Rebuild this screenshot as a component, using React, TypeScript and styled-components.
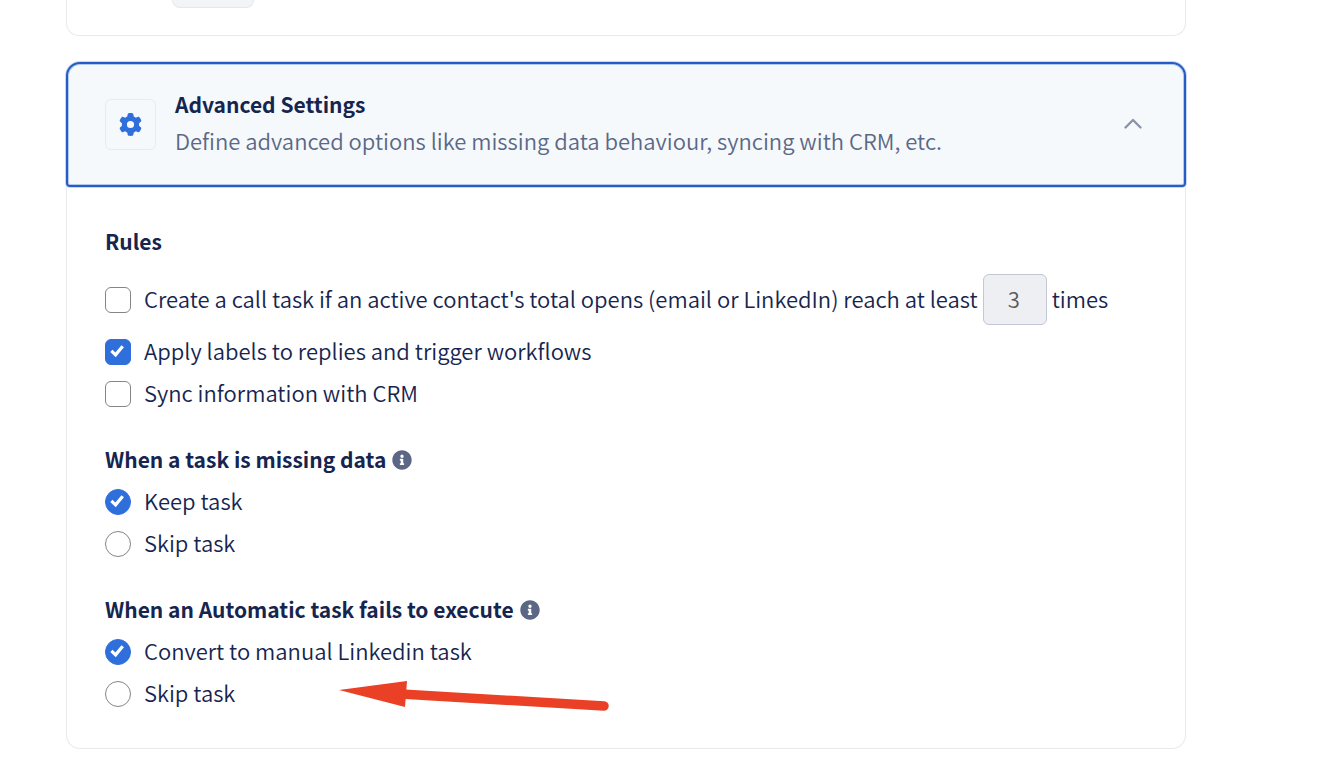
import React, { useState } from "react";
import styled, { createGlobalStyle } from "styled-components";
import { FaInfoCircle } from "react-icons/fa";
import { FaGear } from "react-icons/fa6";

const GlobalStyle = createGlobalStyle`
  *, *::before, *::after { box-sizing: border-box; }
  body {
    margin: 0;
    background: #fff;
    color: #16254f;
    font-family: "Source Sans Pro", "Noto Sans CJK SC", "Noto Sans", sans-serif;
    font-size: 22px;
    font-weight: 350;
    line-height: 32px;
  }
  button, input { font: inherit; color: inherit; }
`;

const Page = styled.main`
  display: flex;
  flex-direction: column;
  gap: 26px;
  padding: 0 158px 15px 66px;
`;

const PreviousCard = styled.section`
  padding: 0 105px 27px;
  border: 1px solid #e8e9ec;
  border-top: 0;
  border-radius: 0 0 13px 13px;
`;

const PreviousField = styled.div`
  width: 82px;
  height: 8px;
  background: #f3f4f6;
  border: 1px solid #e6e7ea;
  border-top: 0;
  border-radius: 0 0 8px 8px;
`;

const Card = styled.section``;

const Header = styled.button`
  display: flex;
  align-items: center;
  gap: 19px;
  width: 100%;
  padding: 24px 41px 25px 37px;
  text-align: left;
  background: #f5f9fc;
  border: 2px solid #265cc6;
  border-radius: 14px 14px 4px 4px;
  box-shadow: 0 0 0 1px #265cc640, inset 0 0 0 1px #265cc650;
  cursor: pointer;
`;

const IconTile = styled.span`
  display: grid;
  place-items: center;
  width: 51px;
  height: 51px;
  border: 1px solid #e5ecf7;
  border-radius: 6px;
  color: #2f6fdb;
`;

const HeaderText = styled.span`
  display: flex;
  flex: 1;
  flex-direction: column;
  gap: 4px;
  padding-bottom: 4px;
`;

const Title = styled.span`
  font-size: 21px;
  font-weight: 700;
`;

const Subtitle = styled.span`
  color: #5b6886;
`;

const Body = styled.div`
  display: flex;
  flex-direction: column;
  gap: 29px;
  padding: 39px 38px 33px;
  border: 1px solid #e8e9ec;
  border-top: 0;
  border-radius: 0 0 14px 14px;
`;

const Group = styled.fieldset<{ $gap?: number }>`
  position: relative;
  display: flex;
  flex-direction: column;
  min-width: 0;
  margin: 0;
  padding: 0;
  border: 0;

  legend {
    display: flex;
    align-items: center;
    gap: 6px;
    height: 32px;
    margin-bottom: ${(p) => p.$gap ?? 5}px;
    padding: 0;
    font-size: 21px;
    font-weight: 700;
  }

  legend svg {
    color: #5b6785;
  }
`;

const Text = styled.span`
  padding-bottom: 4px;
`;

const HeadingText = styled.span`
  padding-bottom: 2px;
`;

const Row = styled.div<{ $tall?: boolean }>`
  display: flex;
  align-items: center;
  height: ${(p) => (p.$tall ? 51 : 42)}px;
  margin-bottom: ${(p) => (p.$tall ? 6 : 0)}px;
`;

const Choice = styled.label`
  display: flex;
  align-items: center;
  gap: 13px;
  cursor: pointer;
`;

const Mark = styled.span<{ $round: boolean }>`
  display: grid;
  width: 26px;
  height: 26px;

  > * {
    grid-area: 1 / 1;
  }

  input {
    appearance: none;
    width: 26px;
    height: 26px;
    margin: 0;
    background: #fff;
    border: 1px solid #858585;
    border-radius: ${(p) => (p.$round ? "50%" : "6px")};
  }

  input:checked {
    background: #2f6fdb;
    border-color: #2f6fdb;
  }

  svg {
    z-index: 1;
    visibility: hidden;
    pointer-events: none;
  }

  input:checked + svg {
    visibility: visible;
  }
`;

const CountInput = styled.input`
  width: 64px;
  height: 51px;
  margin: 0 5px;
  padding: 0 2px 4px 0;
  text-align: center;
  color: #5a5a5a;
  background: #eeeff3;
  border: 1px solid #c2c6d6;
  border-radius: 6px;
`;

const Arrow = styled.svg`
  position: absolute;
  left: 234px;
  bottom: 4px;
`;

function ChevronUp() {
  return (
    <svg width="20" height="20" viewBox="0 0 20 20" fill="none" aria-hidden="true">
      <path d="M2.5 13.5 10 6l7.5 7.5" stroke="#8a93a9" strokeWidth="2.4" strokeLinecap="round" strokeLinejoin="round" />
    </svg>
  );
}

type OptionProps = {
  type: "checkbox" | "radio";
  name: string;
  label: string;
  checked: boolean;
  onChange: () => void;
};

function Option({ type, name, label, checked, onChange }: OptionProps) {
  return (
    <Choice>
      <Mark $round={type === "radio"}>
        <input type={type} name={name} checked={checked} onChange={onChange} />
        <svg width="26" height="26" viewBox="0 0 26 26" fill="none" aria-hidden="true">
          <path d="M6.4 11.8 10.6 15.8 17.7 7.2" stroke="#fff" strokeWidth="3.2" />
        </svg>
      </Mark>
      <Text>{label}</Text>
    </Choice>
  );
}

export default function App() {
  const [open, setOpen] = useState(true);
  const [rules, setRules] = useState({ call: false, labels: true, sync: false });
  const [missing, setMissing] = useState("keep");
  const [failure, setFailure] = useState("convert");
  const toggle = (key: keyof typeof rules) => setRules({ ...rules, [key]: !rules[key] });

  return (
    <>
      <GlobalStyle />
      <Page>
        <PreviousCard>
          <PreviousField />
        </PreviousCard>
        <Card>
          <Header type="button" aria-expanded={open} onClick={() => setOpen(!open)}>
            <IconTile>
              <FaGear size={23} />
            </IconTile>
            <HeaderText>
              <Title>Advanced Settings</Title>
              <Subtitle>Define advanced options like missing data behaviour, syncing with CRM, etc.</Subtitle>
            </HeaderText>
            <ChevronUp />
          </Header>
          {open && (
            <Body>
              <Group $gap={16}>
                <legend>
                  <HeadingText>Rules</HeadingText>
                </legend>
                <Row $tall>
                  <Option
                    type="checkbox"
                    name="call"
                    label="Create a call task if an active contact's total opens (email or LinkedIn) reach at least"
                    checked={rules.call}
                    onChange={() => toggle("call")}
                  />
                  <CountInput aria-label="Number of opens" defaultValue="3" disabled={!rules.call} />
                  <Text>times</Text>
                </Row>
                <Row>
                  <Option
                    type="checkbox"
                    name="labels"
                    label="Apply labels to replies and trigger workflows"
                    checked={rules.labels}
                    onChange={() => toggle("labels")}
                  />
                </Row>
                <Row>
                  <Option
                    type="checkbox"
                    name="sync"
                    label="Sync information with CRM"
                    checked={rules.sync}
                    onChange={() => toggle("sync")}
                  />
                </Row>
              </Group>
              <Group>
                <legend>
                  <HeadingText>When a task is missing data</HeadingText>
                  <FaInfoCircle size={20} />
                </legend>
                <Row>
                  <Option type="radio" name="missing" label="Keep task" checked={missing === "keep"} onChange={() => setMissing("keep")} />
                </Row>
                <Row>
                  <Option type="radio" name="missing" label="Skip task" checked={missing === "skip"} onChange={() => setMissing("skip")} />
                </Row>
              </Group>
              <Group>
                <legend>
                  <HeadingText>When an Automatic task fails to execute</HeadingText>
                  <FaInfoCircle size={20} />
                </legend>
                <Row>
                  <Option type="radio" name="failure" label="Convert to manual Linkedin task" checked={failure === "convert"} onChange={() => setFailure("convert")} />
                </Row>
                <Row>
                  <Option type="radio" name="failure" label="Skip task" checked={failure === "skip"} onChange={() => setFailure("skip")} />
                </Row>
                <Arrow width="272" height="34" viewBox="0 0 272 34" aria-hidden="true">
                  <path d="M0 13 68 4 66 30Z" fill="#ea4026" />
                  <path d="M62 17 265 29" stroke="#ea4026" strokeWidth="9.5" strokeLinecap="round" />
                </Arrow>
              </Group>
            </Body>
          )}
        </Card>
      </Page>
    </>
  );
}
